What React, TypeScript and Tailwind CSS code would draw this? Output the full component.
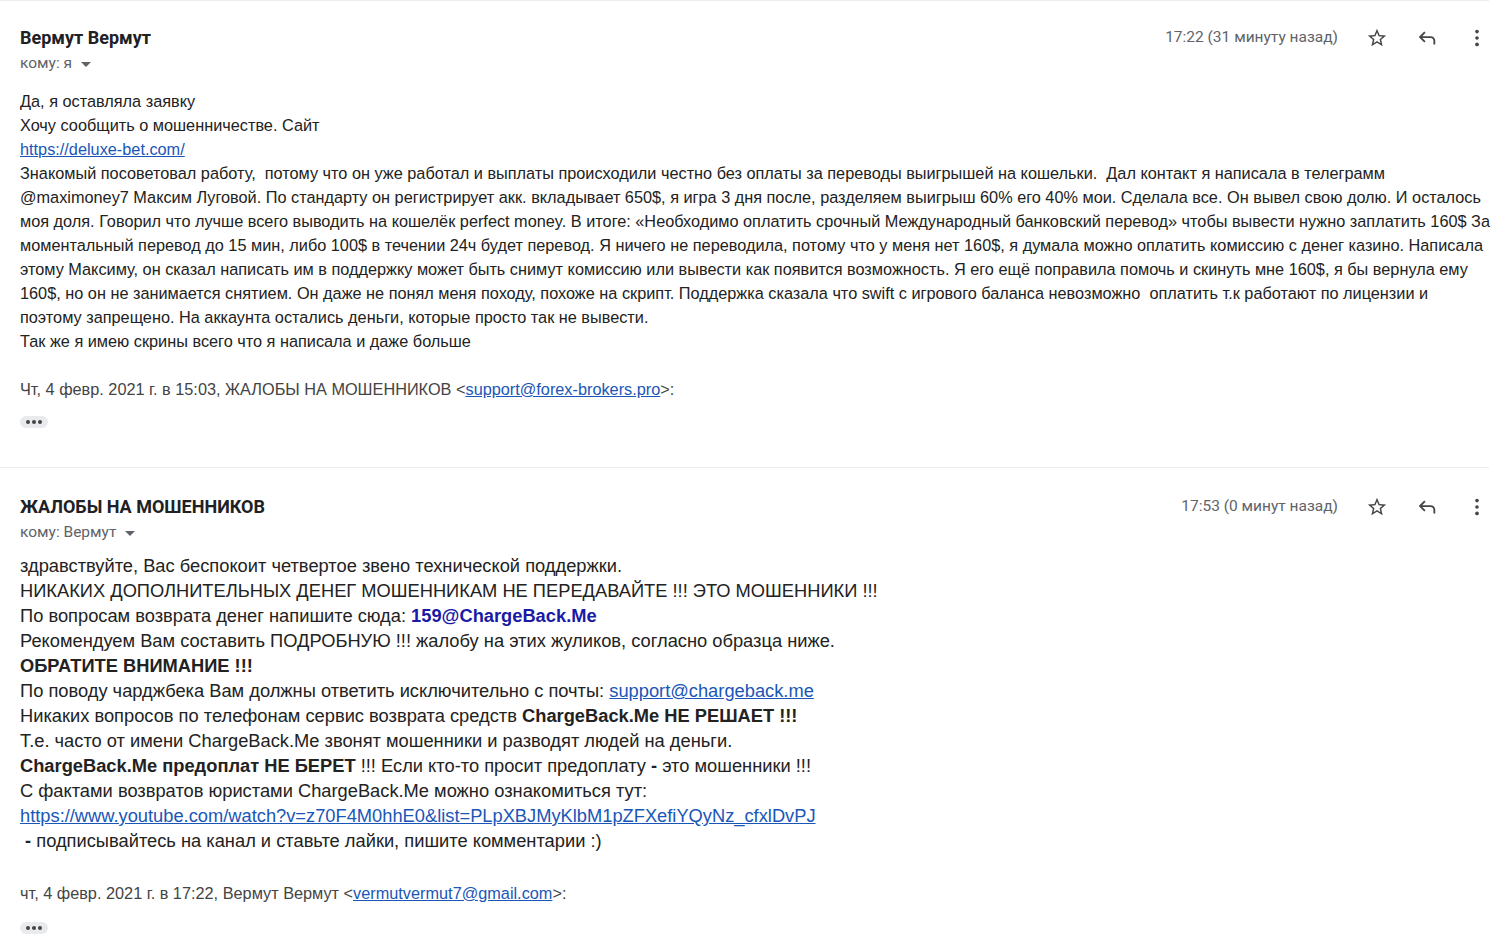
import React from "react";

const Star = () => (
  <svg viewBox="0 0 24 24" className="h-[22px] w-[22px] fill-[#444746]">
    <path d="M22 9.24l-7.19-.62L12 2 9.19 8.63 2 9.24l5.46 4.73L5.82 21 12 17.27 18.18 21l-1.63-7.03L22 9.24zM12 15.4l-3.76 2.27 1-4.28-3.32-2.88 4.38-.38L12 6.1l1.71 4.04 4.38.38-3.32 2.88 1 4.28L12 15.4z" />
  </svg>
);

const Reply = () => (
  <svg viewBox="0 -960 960 960" className="h-[22px] w-[22px] fill-[#444746]">
    <path d="M760-200v-160q0-50-35-85t-85-35H273l144 144-57 56-240-240 240-240 57 56-144 144h367q83 0 141.5 58.5T840-360v160h-80Z" />
  </svg>
);

const More = () => (
  <svg viewBox="0 0 24 24" className="h-[22px] w-[22px] fill-[#444746]">
    <circle cx="12" cy="5" r="2" />
    <circle cx="12" cy="12" r="2" />
    <circle cx="12" cy="19" r="2" />
  </svg>
);

function Header({ name, to, time }: { name: string; to: string; time: string }) {
  return (
    <div className="flex items-start justify-between">
      <div>
        <div className="font-['Roboto',sans-serif] text-[18px] font-bold leading-5 text-[#202124]">{name}</div>
        <div className="mt-[5px] flex items-center gap-[9px] font-['Roboto',sans-serif] text-[15.5px] leading-5 text-[#5f6368]">
          <span>{to}</span>
          <span className="mt-[2px] h-0 w-0 border-x-[5px] border-t-[5px] border-x-transparent border-t-[#5f6368]" />
        </div>
      </div>
      <div className="flex h-5 items-center">
        <span className="mr-[27px] font-['Roboto',sans-serif] text-[15.5px] text-[#5f6368]">{time}</span>
        <div className="flex items-center gap-[26px]">
          <span className="flex w-6 justify-center">
            <Star />
          </span>
          <span className="flex w-6 justify-center">
            <Reply />
          </span>
          <span className="flex w-6 justify-center">
            <More />
          </span>
        </div>
      </div>
    </div>
  );
}

const Dots = () => (
  <div className="flex h-[12px] w-[28px] items-center justify-center gap-[2px] rounded-full bg-[#e8eaed]">
    <span className="h-[4px] w-[4px] rounded-full bg-[#444]" />
    <span className="h-[4px] w-[4px] rounded-full bg-[#444]" />
    <span className="h-[4px] w-[4px] rounded-full bg-[#444]" />
  </div>
);

const body1 = [
  "Знакомый посоветовал работу,  потому что он уже работал и выплаты происходили честно без оплаты за переводы выигрышей на кошельки.  Дал контакт я написала в телеграмм",
  "@maximoney7 Максим Луговой. По стандарту он регистрирует акк. вкладывает 650$, я игра 3 дня после, разделяем выигрыш 60% его 40% мои. Сделала все. Он вывел свою долю. И осталось",
  "моя доля. Говорил что лучше всего выводить на кошелёк perfect money. В итоге: «Необходимо оплатить срочный Международный банковский перевод» чтобы вывести нужно заплатить 160$ За",
  "моментальный перевод до 15 мин, либо 100$ в течении 24ч будет перевод. Я ничего не переводила, потому что у меня нет 160$, я думала можно оплатить комиссию с денег казино. Написала",
  "этому Максиму, он сказал написать им в поддержку может быть снимут комиссию или вывести как появится возможность. Я его ещё поправила помочь и скинуть мне 160$, я бы вернула ему",
  "160$, но он не занимается снятием. Он даже не понял меня походу, похоже на скрипт. Поддержка сказала что swift с игрового баланса невозможно  оплатить т.к работают по лицензии и",
  "поэтому запрещено. На аккаунта остались деньги, которые просто так не вывести.",
  "Так же я имею скрины всего что я написала и даже больше",
];

export default function App() {
  return (
    <div className="h-[937px] w-full overflow-hidden bg-white">
      <div className="w-[1489px] border-t border-[#ececec]">
        <section className="pl-5 pt-[27px]">
          <Header name="Вермут Вермут" to="кому: я" time="17:22 (31 минуту назад)" />
          <div className="mt-[16px] whitespace-pre font-['Liberation_Sans',Arial,sans-serif] text-[16.3px] leading-6 text-[#222]">
            <div>Да, я оставляла заявку</div>
            <div>Хочу сообщить о мошенничестве. Сайт</div>
            <div>
              <a className="text-[#1a56b8] underline">https://deluxe-bet.com/</a>
            </div>
            {body1.map((l) => (
              <div key={l}>{l}</div>
            ))}
            <div className="mt-6 text-[#444]">
              Чт, 4 февр. 2021 г. в 15:03, ЖАЛОБЫ НА МОШЕННИКОВ &lt;
              <a className="text-[#1a56b8] underline">support@forex-brokers.pro</a>&gt;:
            </div>
          </div>
          <div className="mt-[15px]">
            <Dots />
          </div>
        </section>
        <div className="mt-[39px] border-t border-[#ececec]" />
        <section className="pl-5 pt-[29px]">
          <Header name="ЖАЛОБЫ НА МОШЕННИКОВ" to="кому: Вермут" time="17:53 (0 минут назад)" />
          <div className="mt-[11px] whitespace-pre font-['Liberation_Sans',Arial,sans-serif] text-[18.3px] leading-[25px] text-[#222]">
            <div>здравствуйте, Вас беспокоит четвертое звено технической поддержки.</div>
            <div>НИКАКИХ ДОПОЛНИТЕЛЬНЫХ ДЕНЕГ МОШЕННИКАМ НЕ ПЕРЕДАВАЙТЕ !!! ЭТО МОШЕННИКИ !!!</div>
            <div>
              По вопросам возврата денег напишите сюда: <b className="text-[#1a1aa6]">159@ChargeBack.Me</b>
            </div>
            <div>Рекомендуем Вам составить ПОДРОБНУЮ !!! жалобу на этих жуликов, согласно образца ниже.</div>
            <div>
              <b>ОБРАТИТЕ ВНИМАНИЕ !!!</b>
            </div>
            <div>
              По поводу чарджбека Вам должны ответить исключительно с почты:{" "}
              <a className="text-[#1a56b8] underline">support@chargeback.me</a>
            </div>
            <div>
              Никаких вопросов по телефонам сервис возврата средств <b>ChargeBack.Me НЕ РЕШАЕТ !!!</b>
            </div>
            <div>Т.е. часто от имени ChargeBack.Me звонят мошенники и разводят людей на деньги.</div>
            <div>
              <b>ChargeBack.Me предоплат НЕ БЕРЕТ</b> !!! Если кто-то просит предоплату <b>-</b> это мошенники !!!
            </div>
            <div>С фактами возвратов юристами ChargeBack.Me можно ознакомиться тут:</div>
            <div>
              <a className="text-[#1a56b8] underline">
                https://www.youtube.com/watch?v=z70F4M0hhE0&amp;list=PLpXBJMyKlbM1pZFXefiYQyNz_cfxlDvPJ
              </a>
            </div>
            <div>
              {" "}
              <b>-</b> подписывайтесь на канал и ставьте лайки, пишите комментарии :)
            </div>
          </div>
          <div className="mt-[28px] font-['Liberation_Sans',Arial,sans-serif] text-[16.3px] leading-6 text-[#444]">
            чт, 4 февр. 2021 г. в 17:22, Вермут Вермут &lt;
            <a className="text-[#1a56b8] underline">vermutvermut7@gmail.com</a>&gt;:
          </div>
          <div className="mt-[17px]">
            <Dots />
          </div>
        </section>
      </div>
    </div>
  );
}
